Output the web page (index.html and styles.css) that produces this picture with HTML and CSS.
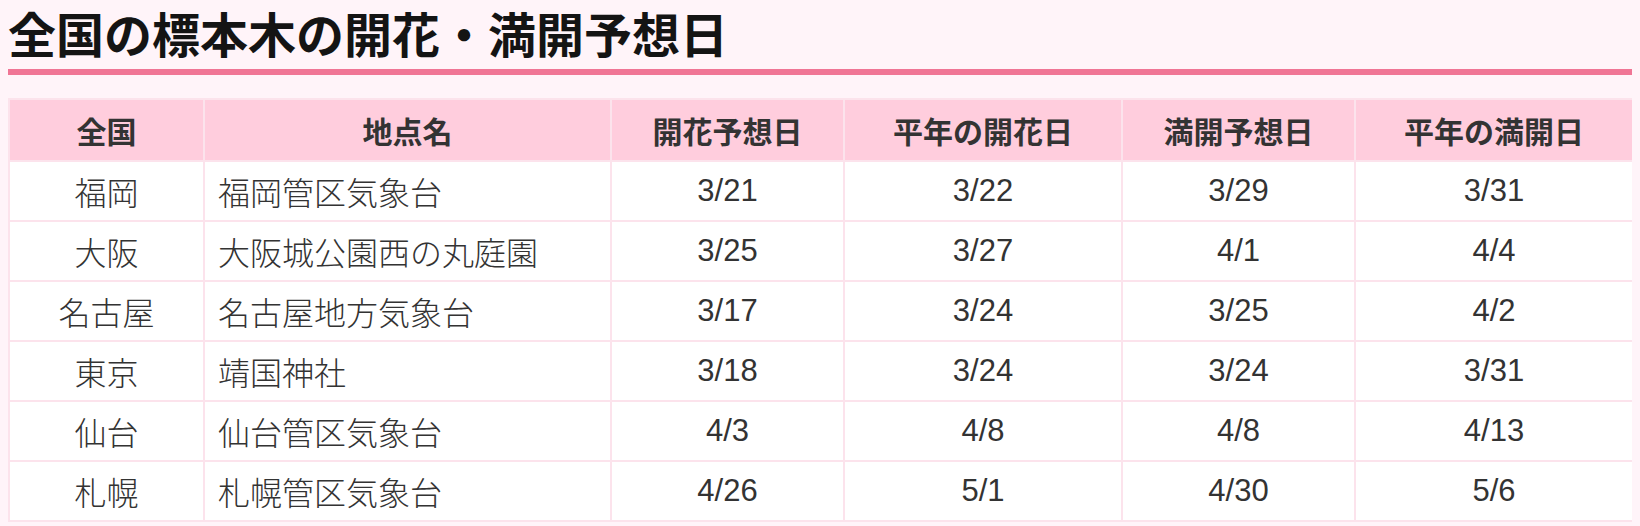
FILE: index.html
```html
<!DOCTYPE html>
<html lang="ja">
<head>
<meta charset="utf-8">
<title>全国の標本木の開花・満開予想日</title>
<link rel="stylesheet" href="styles.css">
</head>
<body>
<h1 class="title">全国の標本木の開花・満開予想日</h1>
<table class="forecast">
  <colgroup>
    <col class="c-area">
    <col class="c-place">
    <col class="c-date">
    <col class="c-date2">
    <col class="c-date">
    <col class="c-date2">
  </colgroup>
  <thead>
    <tr>
      <th>全国</th>
      <th>地点名</th>
      <th>開花予想日</th>
      <th>平年の開花日</th>
      <th>満開予想日</th>
      <th>平年の満開日</th>
    </tr>
  </thead>
  <tbody>
    <tr><td class="area">福岡</td><td class="place">福岡管区気象台</td><td>3/21</td><td>3/22</td><td>3/29</td><td>3/31</td></tr>
    <tr><td class="area">大阪</td><td class="place">大阪城公園西の丸庭園</td><td>3/25</td><td>3/27</td><td>4/1</td><td>4/4</td></tr>
    <tr><td class="area">名古屋</td><td class="place">名古屋地方気象台</td><td>3/17</td><td>3/24</td><td>3/25</td><td>4/2</td></tr>
    <tr><td class="area">東京</td><td class="place">靖国神社</td><td>3/18</td><td>3/24</td><td>3/24</td><td>3/31</td></tr>
    <tr><td class="area">仙台</td><td class="place">仙台管区気象台</td><td>4/3</td><td>4/8</td><td>4/8</td><td>4/13</td></tr>
    <tr><td class="area">札幌</td><td class="place">札幌管区気象台</td><td>4/26</td><td>5/1</td><td>4/30</td><td>5/6</td></tr>
  </tbody>
</table>
</body>
</html>
```
FILE: styles.css
```css
html, body {
  background: #fff4f9;
}
body {
  margin: 8px;
  font-family: "Liberation Sans", "Noto Sans CJK JP", sans-serif;
  color: #333;
}
.title {
  margin: 0;
  padding: 0 0 13px;
  font-family: "Noto Sans CJK JP", sans-serif;
  font-size: 48px;
  line-height: 48px;
  font-weight: 700;
  color: #141414;
  border-bottom: 6px solid #f07595;
}
.forecast {
  margin-top: 23px;
  width: 100%;
  table-layout: fixed;
  border-collapse: collapse;
  background: #fff;
}
.c-area { width: 195px; }
.c-place { width: 407px; }
.c-date { width: 233px; }
.c-date2 { width: 278px; }
.forecast th,
.forecast td {
  border: 2px solid #fce3ec;
  padding: 0;
  text-align: center;
  vertical-align: middle;
  line-height: 1.2;
}
.forecast thead tr { height: 62px; }
.forecast tbody tr { height: 60px; }
.forecast th {
  background: #ffcddd;
  font-family: "Noto Sans CJK JP", sans-serif;
  font-size: 30px;
  font-weight: 700;
  color: #333;
}
.forecast td {
  font-size: 31px;
  color: #333;
}
.forecast td.area,
.forecast td.place {
  font-family: "Noto Sans CJK JP", sans-serif;
  font-size: 32px;
  font-weight: 300;
}
.forecast td.place {
  text-align: left;
  padding-left: 13px;
}
```
